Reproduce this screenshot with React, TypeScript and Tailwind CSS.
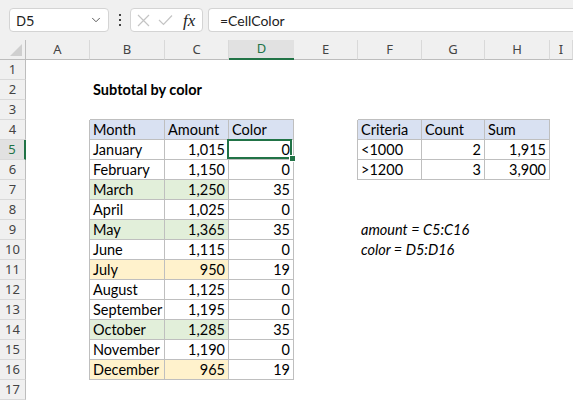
import React from "react";
import { ChevronDown } from "lucide-react";

type Cell = {
  text: string;
  right?: boolean;
  bold?: boolean;
  italic?: boolean;
  fill?: "head" | "green" | "yellow";
};

const columns = ["A", "B", "C", "D", "E", "F", "G", "H", "I"];

const months: [string, string, string, "green" | "yellow" | undefined][] = [
  ["January", "1,015", "0", undefined],
  ["February", "1,150", "0", undefined],
  ["March", "1,250", "35", "green"],
  ["April", "1,025", "0", undefined],
  ["May", "1,365", "35", "green"],
  ["June", "1,115", "0", undefined],
  ["July", "950", "19", "yellow"],
  ["August", "1,125", "0", undefined],
  ["September", "1,195", "0", undefined],
  ["October", "1,285", "35", "green"],
  ["November", "1,190", "0", undefined],
  ["December", "965", "19", "yellow"],
];

const cells: Record<string, Cell> = {
  B2: { text: "Subtotal by color", bold: true },
  B4: { text: "Month", fill: "head" },
  C4: { text: "Amount", fill: "head" },
  D4: { text: "Color", fill: "head" },
  F4: { text: "Criteria", fill: "head" },
  G4: { text: "Count", fill: "head" },
  H4: { text: "Sum", fill: "head" },
  F5: { text: "<1000" },
  G5: { text: "2", right: true },
  H5: { text: "1,915", right: true },
  F6: { text: ">1200" },
  G6: { text: "3", right: true },
  H6: { text: "3,900", right: true },
  F9: { text: "amount = C5:C16", italic: true },
  F10: { text: "color = D5:D16", italic: true },
};

months.forEach(([m, amt, color, fill], i) => {
  const r = i + 5;
  cells[`B${r}`] = { text: m, fill };
  cells[`C${r}`] = { text: amt, right: true, fill };
  cells[`D${r}`] = { text: color, right: true };
});

const inRange = (c: number, r: number, c1: number, c2: number, r1: number, r2: number) =>
  c >= c1 && c <= c2 && r >= r1 && r <= r2;

// table borders: B4:D16 and F4:H6
function borderClass(c: number, r: number) {
  if (inRange(c, r, 1, 3, 4, 16) || inRange(c, r, 5, 7, 4, 6)) return "border-r border-b border-[#bfbfbf]";
  if ((c === 0 && r >= 4 && r <= 16) || (c === 4 && r >= 4 && r <= 6)) return "border-r border-[#bfbfbf]";
  if (r === 3 && ((c >= 1 && c <= 3) || (c >= 5 && c <= 7))) return "border-b border-[#bfbfbf]";
  return "";
}

function fillClass(fill?: Cell["fill"]) {
  if (fill === "head") return "bg-[#d9e1f2]";
  if (fill === "green") return "bg-[#e2efda]";
  if (fill === "yellow") return "bg-[#fff2cc]";
  return "";
}

function FormulaBar() {
  return (
    <div className="h-[40px] bg-[#f0f0f0] flex items-start pt-[8px] pl-[9px] font-['Noto_Sans',sans-serif]">
      <div className="w-[100px] h-[24px] bg-white border border-[#d4d4d4] rounded-[4px] flex items-center justify-between pl-[6px] pr-[5px]">
        <span className="text-[14px] text-[#222]">D5</span>
        <ChevronDown size={14} strokeWidth={1.5} className="text-[#444]" />
      </div>
      <div className="w-[21px] h-[24px] flex flex-col items-center justify-center gap-[3px]">
        <span className="w-[2px] h-[2px] bg-[#444]" />
        <span className="w-[2px] h-[2px] bg-[#444]" />
        <span className="w-[2px] h-[2px] bg-[#444]" />
      </div>
      <div className="w-[73px] h-[24px] bg-white border border-[#d4d4d4] rounded-[4px] flex items-center pl-[6px] gap-[8px]">
        <svg width="13" height="13" viewBox="0 0 13 13" className="shrink-0">
          <path d="M1 1 L12 12 M12 1 L1 12" stroke="#c4c4c4" strokeWidth="1.2" fill="none" />
        </svg>
        <svg width="15" height="12" viewBox="0 0 15 12" className="shrink-0">
          <path d="M1 6 L5.5 10.5 L14 1.5" stroke="#c4c4c4" strokeWidth="1.2" fill="none" />
        </svg>
        <span className="font-['Liberation_Serif',serif] italic text-[17px] text-[#222] leading-none ml-[2px]">fx</span>
      </div>
      <div className="ml-[5px] flex-1 h-[24px] bg-white border border-[#d4d4d4] border-r-0 rounded-l-[4px] flex items-center pl-[11px]">
        <span className="text-[14px] text-[#222] font-['Lato',sans-serif]">=CellColor</span>
      </div>
    </div>
  );
}

export default function App() {
  const rows = Array.from({ length: 17 }, (_, i) => i + 1);

  return (
    <div className="w-[573px] h-[400px] overflow-hidden bg-white">
      <FormulaBar />
      <div className="grid grid-cols-[26px_64px_75px_64px_65px_64px_64px_63px_65px_1fr] auto-rows-[20px]">
        {/* column headers */}
        <div className="bg-[#f0f0f0] border-r border-b border-[#bdbdbd] relative">
          <div className="absolute right-[3px] bottom-[3px] w-0 h-0 border-l-[12px] border-l-transparent border-b-[12px] border-b-[#cfcfcf]" />
        </div>
        {columns.map((col) =>
          col === "D" ? (
            <div
              key={col}
              className="bg-[#e1e1e1] border-b-2 border-[#217346] flex items-center justify-center text-[13px] text-[#217346] font-['Noto_Sans',sans-serif]"
            >
              {col}
            </div>
          ) : (
            <div
              key={col}
              className="bg-[#f0f0f0] border-r border-r-[#d9d9d9] border-b border-b-[#bdbdbd] flex items-center justify-center text-[13px] text-[#444] font-['Noto_Sans',sans-serif]"
            >
              {col}
            </div>
          )
        )}

        {rows.map((r) => (
          <React.Fragment key={r}>
            {r === 5 ? (
              <div className="bg-[#e1e1e1] border-r-2 border-r-[#217346] border-b border-b-[#d9d9d9] flex items-center justify-center text-[13px] text-[#217346] font-['Noto_Sans',sans-serif]">
                {r}
              </div>
            ) : (
              <div className="bg-[#f0f0f0] border-r border-r-[#bdbdbd] border-b border-b-[#d9d9d9] flex items-center justify-center text-[13px] text-[#444] font-['Noto_Sans',sans-serif]">
                {r}
              </div>
            )}
            {columns.map((col, c) => {
              const cell = cells[`${col}${r}`];
              const selected = col === "D" && r === 5;
              return (
                <div
                  key={col}
                  className={`${borderClass(c, r)} ${fillClass(cell?.fill)} ${selected ? "relative z-10" : ""} flex items-center px-[3px] whitespace-nowrap text-[14.5px] text-black font-['Lato',sans-serif] ${
                    cell?.right ? "justify-end" : "justify-start"
                  } ${cell?.bold ? "font-bold" : ""} ${cell?.italic ? "italic" : ""}`}
                >
                  {cell?.text}
                  {selected && (
                    <>
                      <div className="absolute -top-[1px] -left-[2px] right-[1px] bottom-0 border-2 border-[#217346]" />
                      <div className="absolute -right-[3px] -bottom-[3px] w-[7px] h-[7px] bg-[#217346] border border-white" />
                    </>
                  )}
                </div>
              );
            })}
          </React.Fragment>
        ))}
      </div>
    </div>
  );
}
